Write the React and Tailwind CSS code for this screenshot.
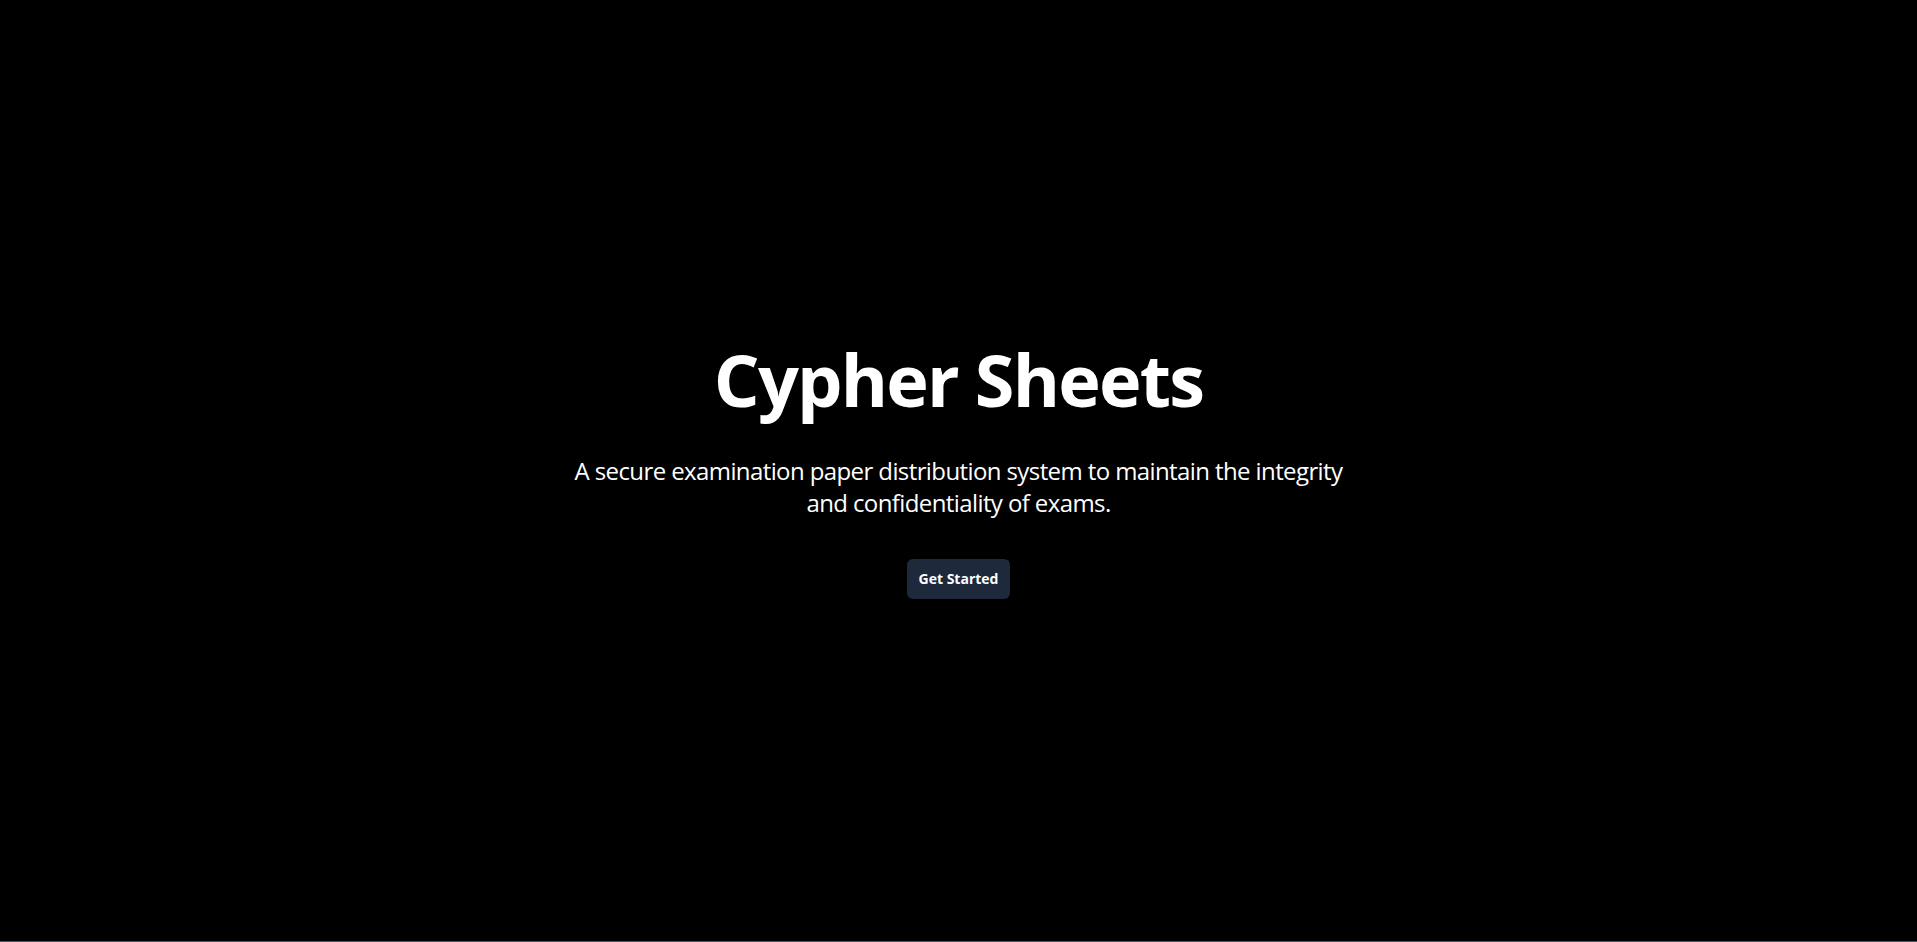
export default function App() {
  return (
    <div
      className="min-h-screen bg-black text-white flex flex-col items-center justify-center border-b border-gray-600 px-4"
      style={{ fontFamily: '"Open Sans", "Noto Sans", sans-serif' }}
    >
      <h1 className="text-7xl font-bold tracking-tight">Cypher Sheets</h1>
      <p className="mt-10 max-w-[800px] text-center text-2xl tracking-tight">
        A secure examination paper distribution system to maintain the integrity
        and confidentiality of exams.
      </p>
      <button className="mt-10 h-10 px-3 rounded-md bg-[#1e293b] text-sm font-bold text-white">
        Get Started
      </button>
    </div>
  );
}
